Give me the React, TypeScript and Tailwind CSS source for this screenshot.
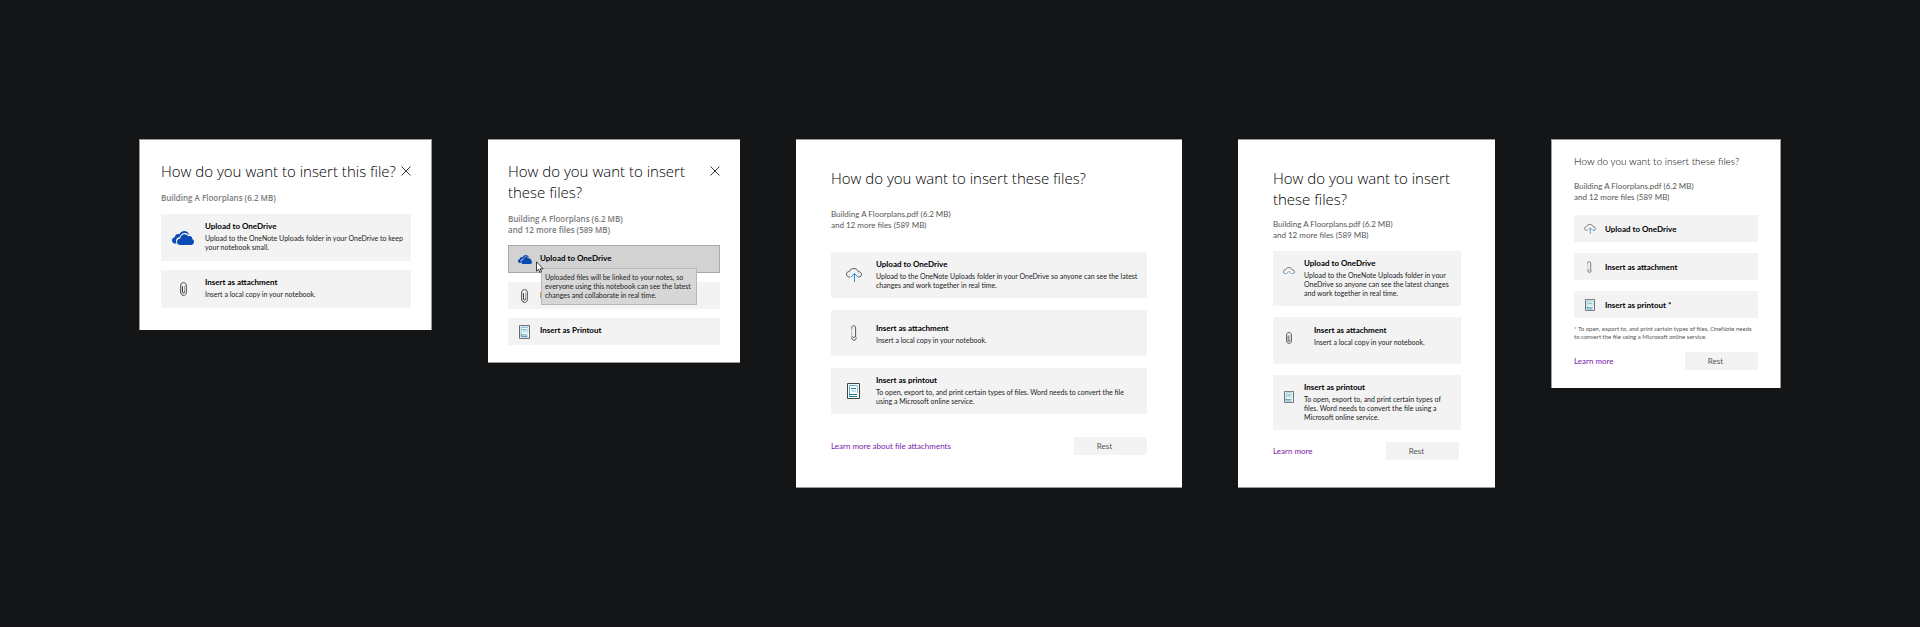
import type { ReactNode } from 'react';
import { clsx } from 'clsx';

type IconProps = { className?: string };

function OneDriveIcon({ className }: IconProps) {
  return (
    <svg viewBox="0 0 22 14" className={className} aria-hidden="true">
      <path fill="#0a4ab3" d="M4.6 12.6H3.4C1.5 12.6 0 11.2 0 9.4c0-1.700 1.200-3 2.800-3.200C2.800 4.300 4.300 3 6 3c.5 0 .9.1 1.300.2C8.200 1.300 10 0 12.200 0c2.400 0 4.300 1.500 5 3.600-.4-.1-.8-.1-1.200-.1-.9-.9-2.100-1.400-3.400-1.400-2.400 0-4.400 1.700-4.900 4C5.500 6.400 4 8 4 10.200c0 .9.200 1.700.6 2.400z" />
      <path fill="#0a4ab3" d="M8.200 14C6.300 14 5 12.600 5 10.800c0-1.800 1.400-3.300 3.300-3.400.1-2.400 1.900-4.200 4.300-4.200 1.500 0 2.800.8 3.500 2 .4-.2.8-.3 1.300-.3 1.700 0 3 1.300 3 3v.3c1 .3 1.600 1.300 1.600 2.600 0 1.800-1.300 3.200-3 3.200z" />
    </svg>
  );
}

function PaperclipIcon({ className }: IconProps) {
  return (
    <svg viewBox="0 0 7 14" className={className} aria-hidden="true" fill="none" strokeLinecap="round">
      <path stroke="#a8a8a8" d="M4.500 4v6.500" />
      <path stroke="#333333" strokeWidth="0.9" d="M2.500 4.500v5.500c0 1.500 2 1.500 2 0M.7 10V3.200C.7-.2 6.300-.2 6.300 3.200v7.300c0 3.900-5.600 3.900-5.600 0" />
    </svg>
  );
}

function ClipOutlineIcon({ className }: IconProps) {
  return (
    <svg viewBox="0 0 6 16" className={className} aria-hidden="true" fill="none" strokeWidth="0.9">
      <path stroke="#b5b5b5" d="M.7 3v10" />
      <path stroke="#444444" d="M.7 3.500C.7-.2 4.600-.2 4.600 3V12M.7 12.500c0 3.600 4.600 3.600 4.600 0M1.400 11.500l1.500 1.200 1.500-1.200" />
    </svg>
  );
}

function CloudUploadIcon({ className, short = false }: IconProps & { short?: boolean }) {
  return (
    <svg viewBox={short ? '0 0 16 9' : '0 0 16 14'} className={className} aria-hidden="true" fill="none">
      <path stroke="#444444" strokeWidth="0.9" d="M4.200 9H3.500C1.900 9 .5 7.900.5 6.200c0-1.600 1.200-2.700 2.800-2.700C4 1.700 5.800.5 7.800.5c2.200 0 4 1.400 4.500 3.200 1.800 0 3.200 1.100 3.200 2.700C15.500 7.900 14.300 9 12.600 9H12" />
      <path stroke="#2a8dd0" d={short ? 'M4.500 9 8 5.500 11.500 9' : 'M8.500 14V5.800M5 9l3.500-3.500L12 9'} />
    </svg>
  );
}

function PrintoutIcon({ className }: IconProps) {
  return (
    <svg viewBox="0 0 13 16" className={className} aria-hidden="true" fill="none">
      <path fill="#ffffff" stroke="#444444" d="M.5.5h12v15H.5z" />
      <path stroke="#5fb0c8" d="M2.500 14V2.500h8" />
      <path stroke="#1b7f9e" d="M4 5.500h5M2 11.500h8M3 13.500h7" />
      <path stroke="#8cc6d6" d="M4 8h5M10.500 3v7" />
    </svg>
  );
}

function CursorIcon({ className }: IconProps) {
  return (
    <svg viewBox="0 0 8 12" className={className} aria-hidden="true">
      <path fill="#ffffff" stroke="#111111" strokeWidth="0.8" d="M.5.8v9.400l2.100-1.900 1.300 3.100 1.500-.7-1.300-2.900h3z" />
    </svg>
  );
}

function Dialog({ className, children }: { className: string; children: ReactNode }) {
  return (
    <section role="dialog" className={clsx('flex shrink-0 flex-col border-t border-[#9a9b9d] bg-white text-black', className)}>
      {children}
    </section>
  );
}

function CloseButton() {
  return (
    <button type="button" aria-label="Close" className="mt-[5px] h-[10px] w-[10px] shrink-0">
      <svg viewBox="0 0 10 10" className="h-full w-full" fill="none" stroke="#222222" strokeWidth="0.9">
        <path d="M.5.5l9 9M9.500.5l-9 9" />
      </svg>
    </button>
  );
}

type OptionProps = {
  icon: ReactNode;
  title: string;
  detail?: string;
  className?: string;
  iconClass: string;
  bodyClass?: string;
  selected?: boolean;
};

function Option({ icon, title, detail, className, iconClass, bodyClass, selected = false }: OptionProps) {
  return (
    <button type="button" className={clsx('flex w-full text-left', selected ? 'border border-[#a9a9a9] bg-[#d2d2d2]' : 'bg-[#f3f3f3]', className)}>
      <span className={clsx('flex shrink-0 justify-center', iconClass)}>{icon}</span>
      <span className={clsx('flex flex-col gap-[2px]', bodyClass)}>
        <span className="text-[8px] leading-[11px] font-bold">{title}</span>
        {detail && <span className="text-[7px] leading-[9px] text-[#222222]">{detail}</span>}
      </span>
    </button>
  );
}

function Footer({ link, className }: { link: string; className: string }) {
  return (
    <div className={clsx('flex items-center justify-between', className)}>
      <a href="#learn-more" className="text-[8px] leading-[11px] text-[#7719aa]">{link}</a>
      <button type="button" className="h-[18px] w-[73px] bg-[#f3f3f3] pr-[12px] text-center text-[8px] leading-[11px] text-[#555555]">
        Rest
      </button>
    </div>
  );
}

function FileSummary({ className }: { className?: string }) {
  return (
    <p className={clsx('text-[8px] leading-[11px] text-[#555555]', className)}>
      Building A Floorplans.pdf (6.2 MB)
      <br />
      and 12 more files (589 MB)
    </p>
  );
}

const UPLOAD_DETAIL = 'Upload to the OneNote Uploads folder in your OneDrive so anyone can see the latest changes and work together in real time.';
const PRINT_DETAIL = 'To open, export to, and print certain types of files. Word needs to convert the file using a Microsoft online service.';

export default function App() {
  return (
    <main className="flex min-h-screen items-start justify-center gap-14 border-b border-[#1a1216] bg-[#141517] pt-[139px] font-['Lato','Open_Sans',sans-serif]">
      <Dialog className="w-[293px] border-x pr-[20px] pl-[21px] pt-[21px] pb-[22px]">
        <div className="flex justify-between">
          <h2 className="font-['Open_Sans',sans-serif] text-[15px] leading-[21px] font-light whitespace-nowrap">How do you want to insert this file?</h2>
          <CloseButton />
        </div>
        <p className="mt-[10px] font-['Open_Sans',sans-serif] text-[8px] leading-[11px] font-semibold text-[#7a7a7a]">Building A Floorplans (6.2 MB)</p>
        <div className="mt-[11px] flex flex-col gap-[9px]">
          <Option className="min-h-[47px] items-center" iconClass="w-[44px]" bodyClass="pb-[2px]" icon={<OneDriveIcon className="h-[14px] w-[22px]" />} title="Upload to OneDrive" detail="Upload to the OneNote Uploads folder in your OneDrive to keep your notebook small." />
          <Option className="min-h-[38px] items-center" iconClass="w-[44px]" bodyClass="pb-[2px]" icon={<PaperclipIcon className="h-[14px] w-[7px]" />} title="Insert as attachment" detail="Insert a local copy in your notebook." />
        </div>
      </Dialog>

      <Dialog className="w-[252px] border-b pr-[20px] pl-[20px] pt-[21px] pb-[17px]">
        <div className="flex justify-between">
          <h2 className="font-['Open_Sans',sans-serif] text-[15px] leading-[21px] font-light">
            How do you want to insert
            <br />
            these files?
          </h2>
          <CloseButton />
        </div>
        <p className="mt-[10px] font-['Open_Sans',sans-serif] text-[8px] leading-[11px] font-semibold text-[#7a7a7a]">
          Building A Floorplans (6.2 MB)
          <br />
          and 12 more files (589 MB)
        </p>
        <div className="mt-[10px] flex flex-col gap-[9px]">
          <div className="relative">
            <Option selected className="min-h-[28px] items-center" iconClass="w-[31px]" bodyClass="pb-[2px]" icon={<OneDriveIcon className="h-[9px] w-[14px]" />} title="Upload to OneDrive" />
            <CursorIcon className="absolute top-[16px] left-[28px] z-20 h-[12px] w-[8px]" />
            <div role="tooltip" className="absolute top-[23px] left-[33px] z-10 w-[156px] border border-[#b8b8b8] bg-[#d7d7d7] px-[3px] py-[4px] text-[7px] leading-[9px] text-[#222222]">
              Uploaded files will be linked to your notes, so everyone using this notebook can see the latest changes and collaborate in real time.
            </div>
          </div>
          <Option className="min-h-[27px] items-center" iconClass="w-[32px]" icon={<PaperclipIcon className="h-[14px] w-[7px]" />} title="Insert as attachment" />
          <Option className="min-h-[27px] items-center" iconClass="w-[32px]" bodyClass="pb-[2px]" icon={<PrintoutIcon className="h-[14px] w-[11px]" />} title="Insert as Printout" />
        </div>
      </Dialog>

      <Dialog className="w-[386px] border-b px-[35px] pt-[28px] pb-[32px]">
        <h2 className="font-['Open_Sans',sans-serif] text-[15px] leading-[21px] font-light">How do you want to insert these files?</h2>
        <FileSummary className="mt-[20px]" />
        <div className="mt-[21px] flex flex-col gap-[12px]">
          <Option className="min-h-[46px] items-center pr-[4px]" iconClass="w-[45px]" bodyClass="pb-[2px]" icon={<CloudUploadIcon className="h-[14px] w-[16px]" />} title="Upload to OneDrive" detail={UPLOAD_DETAIL} />
          <Option className="min-h-[46px] items-center pr-[4px]" iconClass="w-[45px]" bodyClass="pt-[2px]" icon={<ClipOutlineIcon className="h-[16px] w-[6px]" />} title="Insert as attachment" detail="Insert a local copy in your notebook." />
          <Option className="min-h-[46px] items-center pr-[20px]" iconClass="w-[45px]" bodyClass="pb-[2px]" icon={<PrintoutIcon className="h-[16px] w-[13px]" />} title="Insert as printout" detail={PRINT_DETAIL} />
        </div>
        <Footer className="mt-[23px]" link="Learn more about file attachments" />
      </Dialog>

      <Dialog className="w-[257px] border-b pr-[34px] pl-[35px] pt-[28px] pb-[27px]">
        <h2 className="font-['Open_Sans',sans-serif] text-[15px] leading-[21px] font-light">
          How do you want to insert
          <br />
          these files?
        </h2>
        <FileSummary className="mt-[9px]" />
        <div className="mt-[10px] flex flex-col gap-[11px]">
          <Option className="min-h-[55px] items-start pr-[10px]" iconClass="w-[31px] pt-[16px]" bodyClass="pt-[7px]" icon={<CloudUploadIcon short className="h-[7px] w-[12px]" />} title="Upload to OneDrive" detail={UPLOAD_DETAIL} />
          <Option className="min-h-[47px] items-start pr-[10px]" iconClass="w-[31px] pt-[15px]" bodyClass="ml-[10px] pt-[8px]" icon={<PaperclipIcon className="h-[12px] w-[6px]" />} title="Insert as attachment" detail="Insert a local copy in your notebook." />
          <Option className="min-h-[55px] items-start pr-[10px]" iconClass="w-[31px] pt-[16px]" bodyClass="pt-[7px]" icon={<PrintoutIcon className="h-[12px] w-[10px]" />} title="Insert as printout" detail={PRINT_DETAIL} />
        </div>
        <Footer className="mt-[12px] pr-[2px]" link="Learn more" />
      </Dialog>

      <Dialog className="w-[230px] border-x px-[22px] pt-[14px] pb-[18px]">
        <h2 className="text-[10px] leading-[14px] font-light">How do you want to insert these files?</h2>
        <FileSummary className="mt-[13px]" />
        <div className="mt-[12px] flex flex-col gap-[11px]">
          <Option className="min-h-[27px] items-center" iconClass="w-[31px]" bodyClass="pt-[2px]" icon={<CloudUploadIcon className="h-[10px] w-[12px]" />} title="Upload to OneDrive" />
          <Option className="min-h-[27px] items-center" iconClass="w-[31px]" bodyClass="pt-[2px]" icon={<ClipOutlineIcon className="h-[12px] w-[5px]" />} title="Insert as attachment" />
          <Option className="min-h-[27px] items-center" iconClass="w-[31px]" bodyClass="pt-[2px]" icon={<PrintoutIcon className="h-[12px] w-[10px]" />} title="Insert as printout *" />
        </div>
        <p className="mt-[7px] text-[6px] leading-[8px] text-[#555555]">
          * To open, export to, and print certain types of files, OneNote needs to convert the file using a Microsoft online service.
        </p>
        <Footer className="mt-[11px]" link="Learn more" />
      </Dialog>
    </main>
  );
}
